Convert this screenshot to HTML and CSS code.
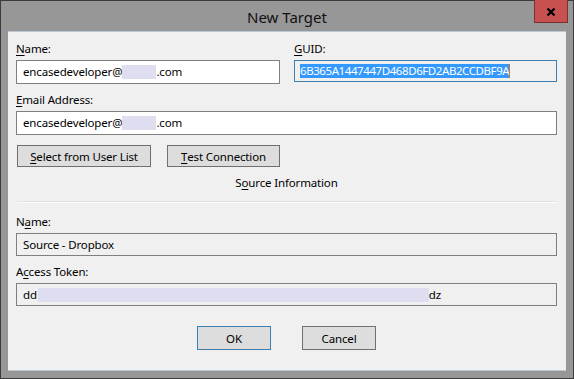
FILE: index.html
```html
<!DOCTYPE html>
<html>
<head>
<meta charset="utf-8">
<link rel="stylesheet" href="styles.css">
</head>
<body>
<div class="window">
  <div class="titlebar">
    <span class="title">New Target</span>
    <div class="close">
      <svg width="10" height="10" viewBox="0 0 10 10"><path d="M1.5 1.5 L8.5 8.5 M8.5 1.5 L1.5 8.5" stroke="#000" stroke-width="2.2" fill="none"/></svg>
    </div>
  </div>
  <div class="client">
    <div class="row2">
      <div class="field">
        <div class="label"><u>N</u>ame:</div>
        <div class="input">encasedeveloper@<span class="redact w-short"></span>.com</div>
      </div>
      <div class="field">
        <div class="label"><u>G</u>UID:</div>
        <div class="input readonly focused guid"><span class="sel">6B365A1447447D468D6FD2AB2CCDBF9A</span><span class="caret"></span></div>
      </div>
    </div>
    <div class="field gap-top">
      <div class="label"><u>E</u>mail Address:</div>
      <div class="input">encasedeveloper@<span class="redact w-short"></span>.com</div>
    </div>
    <div class="btn-row">
      <div class="btn btn-select"><u>S</u>elect from User List</div>
      <div class="btn btn-test"><u>T</u>est Connection</div>
    </div>
    <div class="section-title">S<u>o</u>urce Information</div>
    <div class="separator"></div>
    <div class="field">
      <div class="label">N<u>a</u>me:</div>
      <div class="input readonly short">Source - Dropbox</div>
    </div>
    <div class="field gap-top-sm">
      <div class="label">A<u>c</u>cess Token:</div>
      <div class="input readonly short">dd<span class="redact w-long"></span>dz</div>
    </div>
    <div class="dialog-buttons">
      <div class="btn btn-dialog default">OK</div>
      <div class="btn btn-dialog">Cancel</div>
    </div>
  </div>
</div>
</body>
</html>
```
FILE: styles.css
```css
html, body {
  margin: 0;
  padding: 0;
}
body {
  font-family: "Noto Sans", "Open Sans", sans-serif;
  font-size: 11.5px;
  letter-spacing: -0.15px;
  color: #000;
  background: #979797;
}
.window {
  width: 574px;
  height: 379px;
  box-sizing: border-box;
  border: 1px solid #3c3c3c;
  background: #979797;
  display: flex;
  flex-direction: column;
}
.titlebar {
  height: 30px;
  position: relative;
  display: flex;
  justify-content: center;
  align-items: center;
}
.title {
  font-size: 15px;
  letter-spacing: 0;
  color: #111;
  padding-top: 2px;
}
.close {
  position: absolute;
  top: -1px;
  right: 5px;
  width: 34px;
  height: 23px;
  box-sizing: border-box;
  background: #c75050;
  border: 1px solid #7a3030;
  border-top: none;
  display: flex;
  align-items: center;
  justify-content: center;
}
.close svg {
  display: block;
  margin-top: 2px;
}
.client {
  flex: 1;
  margin: 0 7px 7px;
  background: #f0f0f0;
  border-top: 1px solid #b8c6d6;
  border-bottom: 1px solid #b8c6d6;
  padding: 9px 9px 0 8px;
  display: flex;
  flex-direction: column;
}
.row2 {
  display: grid;
  grid-template-columns: 264px 1fr;
  column-gap: 14px;
}
.label {
  height: 16px;
  line-height: 16px;
  margin-bottom: 3px;
  white-space: nowrap;
}
.input {
  height: 24px;
  box-sizing: border-box;
  border: 1px solid #7f7f7f;
  background: #fff;
  line-height: 22px;
  padding: 0 6px;
  white-space: nowrap;
  overflow: hidden;
  display: flex;
  align-items: center;
}
.input.short {
  height: 23px;
  line-height: 21px;
}
.input.readonly {
  background: #f0f0f0;
}
.input.focused {
  border-color: #3c7fb1;
}
.input.guid {
  height: 22px;
  margin-top: 2px;
  padding-left: 5px;
}
.sel {
  background: #3399ff;
  color: #fff;
  line-height: 14px;
  height: 14px;
  letter-spacing: -0.42px;
}
.caret {
  display: inline-block;
  width: 1px;
  height: 14px;
  background: #d9780c;
}
.redact {
  display: inline-block;
  height: 14px;
  background: #dedef0;
}
.w-short {
  width: 34px;
}
.w-long {
  width: 391px;
  margin-left: 1px;
}
.gap-top {
  margin-top: 8px;
}
.gap-top-sm {
  margin-top: 8px;
}
.btn {
  box-sizing: border-box;
  border: 1px solid #707070;
  background: #dddddd;
  display: flex;
  align-items: center;
  justify-content: center;
  white-space: nowrap;
}
.btn-row {
  display: flex;
  gap: 16px;
  margin-top: 10px;
  padding-left: 1px;
}
.btn-row .btn {
  height: 22px;
}
.btn-select {
  width: 134px;
}
.btn-test {
  width: 113px;
}
.section-title {
  text-align: center;
  height: 16px;
  line-height: 16px;
  margin-top: 8px;
}
.separator {
  height: 1px;
  margin: 10px 1px 11px;
  background: #fcfcfc;
  border-top: 1px solid #e2e2e2;
}
.dialog-buttons {
  display: flex;
  justify-content: center;
  gap: 31px;
  margin-top: 20px;
}
.btn-dialog {
  width: 74px;
  height: 24px;
}
.btn-dialog.default {
  border-color: #3c7fb1;
}
u {
  text-decoration-thickness: 1px;
  text-underline-offset: 2px;
}
```
